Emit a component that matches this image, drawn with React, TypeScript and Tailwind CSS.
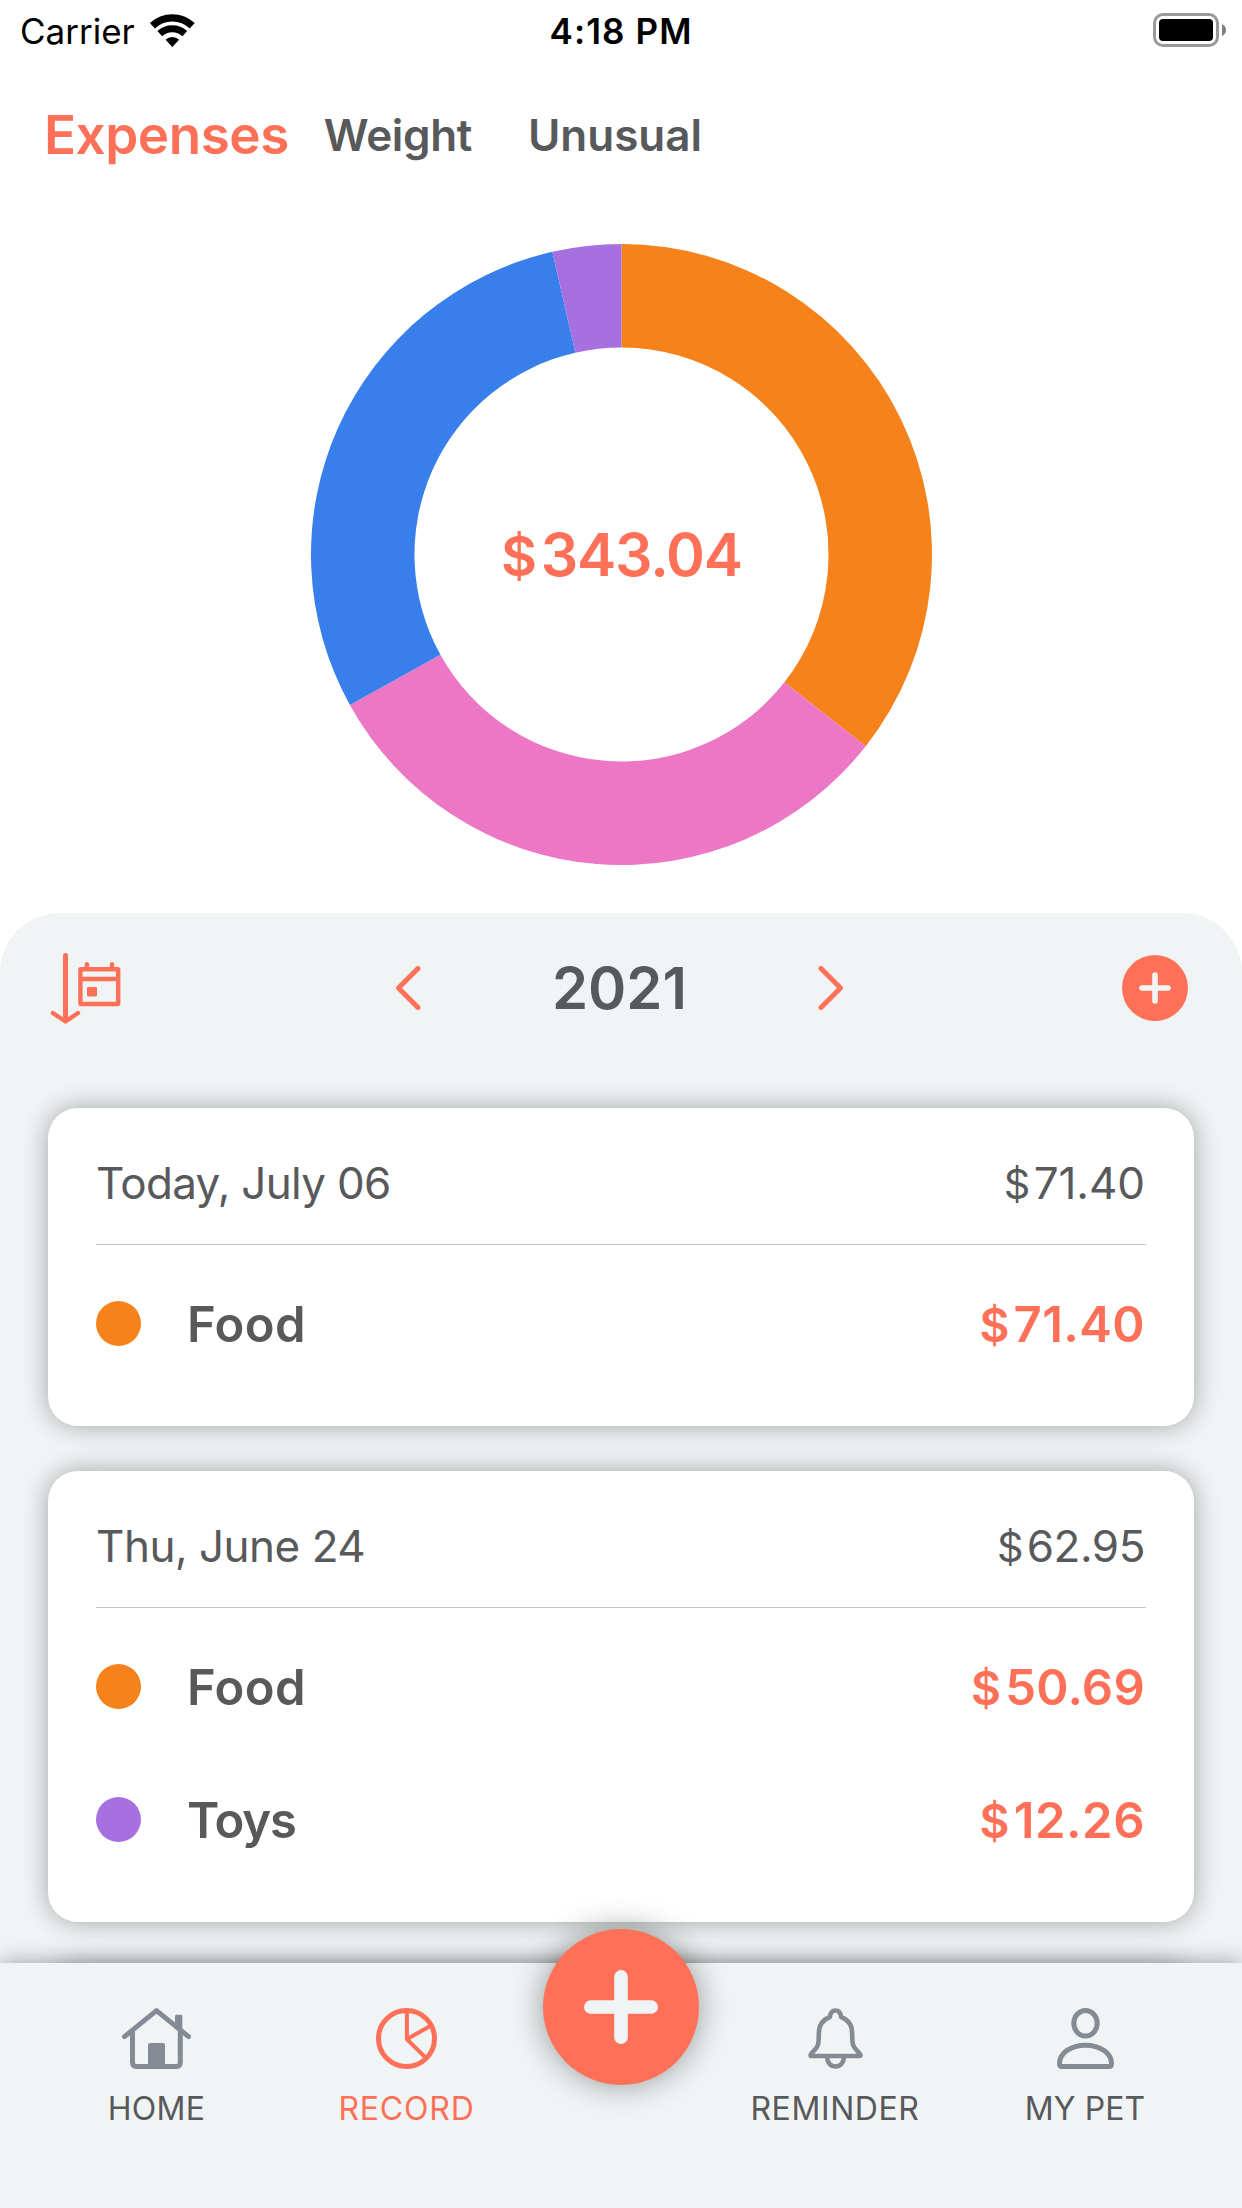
import React from "react";

const donut = [
  { name: "Food", value: 122.09, color: "#f6821b" },
  { name: "Health", value: 107.57, color: "#eb77c5" },
  { name: "Grooming", value: 101.12, color: "#387feb" },
  { name: "Toys", value: 12.26, color: "#a770e1" },
];

const days = [
  {
    date: "Today, July 06",
    tracking: "tracking-[-0.7px]",
    total: "71.40",
    totalTracking: "tracking-[-0.07px]",
    items: [
      { name: "Food", nameTracking: "tracking-[0.37px]", dot: "bg-[#f6821b]", amount: "71.40", amountTracking: "tracking-[0.37px]" },
    ],
  },
  {
    date: "Thu, June 24",
    tracking: "tracking-[-0.5px]",
    total: "62.95",
    totalTracking: "tracking-[-0.44px]",
    items: [
      { name: "Food", nameTracking: "tracking-[0.37px]", dot: "bg-[#f6821b]", amount: "50.69", amountTracking: "tracking-[0.22px]" },
      { name: "Toys", nameTracking: "tracking-[-1.1px]", dot: "bg-[#a770e1]", amount: "12.26", amountTracking: "tracking-[0.5px]" },
    ],
  },
];

function Money({ value, className }: { value: string; className: string }) {
  return (
    <span className={className}>
      <span className="mr-[0.085em] text-[0.94em]">$</span>
      {value}
    </span>
  );
}

function StatusBar() {
  return (
    <header className="grid h-[62px] shrink-0 grid-cols-3 items-center pl-5 pr-4 text-[35px] leading-none text-black">
      <div className="flex items-center">
        <span className="pt-px">Carrier</span>
        <svg className="ml-[13px] h-[36px] w-[48px]" viewBox="148 12 48 36" fill="none">
          <g stroke="currentColor">
            <path d="M152.4 24.7A29.2 29.2 0 0 1 192.2 24.7" strokeWidth="7.4" />
            <path d="M159.8 32.6A18.3 18.3 0 0 1 184.8 32.6" strokeWidth="7" />
          </g>
          <path d="M172.3 46 165.5 38.7A10 10 0 0 1 179.1 38.7Z" fill="currentColor" />
        </svg>
      </div>
      <span className="pr-[4px] pt-px text-center font-semibold tracking-[1.1px]">4:18 PM</span>
      <svg className="-mt-[2px] h-[34px] w-[73px] justify-self-end" viewBox="0 0 73 34">
        <rect x="1.5" y="1.5" width="63" height="31" rx="8.5" fill="none" stroke="#999" strokeWidth="3" />
        <rect x="6" y="6" width="54" height="22" rx="4" />
        <path d="M69 11Q73 13 73 17T69 23Z" fill="#808080" />
      </svg>
    </header>
  );
}

function Tabs() {
  return (
    <nav className="flex h-[147px] shrink-0 items-center whitespace-nowrap pl-11 text-[44px] font-semibold leading-none">
      <span className="text-[53px] tracking-[-0.48px] text-[#ff7058]">Expenses</span>
      <span className="-mt-[2px] ml-[35px] tracking-[-0.35px]">Weight</span>
      <span className="-mt-[2px] ml-14">Unusual</span>
    </nav>
  );
}

function Donut() {
  const total = donut.reduce((sum, s) => sum + s.value, 0);
  const outer = 310.5;
  const inner = 207;
  let start = 0;
  return (
    <section className="relative mx-auto h-[621px] w-[621px]">
      <svg className="size-full" viewBox="-310.5 -310.5 621 621">
        {donut.map((s) => {
          const end = start + (s.value / total) * 2 * Math.PI;
          const at = (r: number, a: number) => `${r * Math.sin(a)} ${-r * Math.cos(a)}`;
          const large = end - start > Math.PI ? 1 : 0;
          const d = `M${at(outer, start)}A${outer} ${outer} 0 ${large} 1 ${at(outer, end)}L${at(inner, end)}A${inner} ${inner} 0 ${large} 0 ${at(inner, start)}Z`;
          start = end;
          return <path key={s.name} d={d} fill={s.color} />;
        })}
      </svg>
      <div className="absolute inset-0 flex items-center justify-center pl-px text-[59px] font-semibold leading-none text-[#ff7058]">
        <Money value="343.04" className="tracking-[-1.2px]" />
      </div>
    </section>
  );
}

function SortByDateIcon() {
  return (
    <svg className="mt-[2px] h-[72px] w-[72px]" viewBox="50 953 72 72" fill="none" stroke="currentColor" strokeLinecap="round" strokeLinejoin="round">
      <path d="M65.5 955.5V1020" strokeWidth="5" />
      <path d="M52.8 1013 65.5 1021.5 78 1013" strokeWidth="4.4" />
      <g strokeWidth="4.4">
        <rect x="80.4" y="969.2" width="37.8" height="34.8" rx="0.5" />
        <path d="M81 979H118" />
        <path d="M86.9 964.2V968M112 964.2V968" />
      </g>
      <rect x="87" y="987" width="10" height="9.5" rx="1" fill="currentColor" stroke="none" />
    </svg>
  );
}

function YearBar() {
  return (
    <div className="grid h-[150px] shrink-0 grid-cols-3 items-center pl-[50px] pr-[54px] text-[#ff7058]">
      <SortByDateIcon />
      <div className="flex items-center justify-center gap-[131px] pl-px">
        <svg className="h-[44px] w-[26px] shrink-0" viewBox="0 0 26 44" fill="none" stroke="currentColor" strokeWidth="5" strokeLinecap="round" strokeLinejoin="round">
          <path d="M23 2.5 3.5 22 23 41.5" />
        </svg>
        <span className="text-[58px] font-semibold leading-none text-[#58595b]">2021</span>
        <svg className="h-[44px] w-[26px] shrink-0" viewBox="0 0 26 44" fill="none" stroke="currentColor" strokeWidth="5" strokeLinecap="round" strokeLinejoin="round">
          <path d="M3 2.5 22.5 22 3 41.5" />
        </svg>
      </div>
      <div className="flex size-[66px] items-center justify-center justify-self-end rounded-full bg-[#ff7058]">
        <svg className="size-8" viewBox="0 0 32 32" fill="none" stroke="#f0f4f5" strokeWidth="5.6" strokeLinecap="round">
          <path d="M16 3V29M3 16H29" />
        </svg>
      </div>
    </div>
  );
}

function DayCard({ day }: { day: (typeof days)[number] }) {
  return (
    <article className="rounded-[30px] bg-white px-12 pb-9 leading-none shadow-[0_0_26px_rgba(0,0,0,0.33)]">
      <div className="mb-3 flex h-[137px] items-center justify-between border-b border-[#c4c4c4] pr-px pt-[14px] text-[44px]">
        <span className={day.tracking}>{day.date}</span>
        <Money value={day.total} className={day.totalTracking} />
      </div>
      {day.items.map((item) => (
        <div key={item.name} className="flex h-[133px] items-center pr-px text-[49px] font-semibold">
          <span className={`size-[45px] rounded-full ${item.dot}`} />
          <span className={`ml-[46px] flex-1 pt-[2px] ${item.nameTracking}`}>{item.name}</span>
          <Money value={item.amount} className={`pt-[2px] text-[#ff7058] ${item.amountTracking}`} />
        </div>
      ))}
    </article>
  );
}

function HomeIcon() {
  return (
    <svg className="h-[61px] w-[69px]" viewBox="0 0 69 61" fill="none" stroke="currentColor" strokeWidth="5" strokeLinecap="round" strokeLinejoin="round">
      <path d="M2.5 28.6 34.5 2.6 66.5 28.6" />
      <path d="M10.5 23V54.5Q10.5 58.5 14.5 58.5H54.3Q58.3 58.5 58.3 54.5V23" />
      <path d="M26 58V37Q26 35 28 35H41Q43 35 43 37V58Z" fill="currentColor" stroke="none" />
      <path d="M53 20V8.2Q53 6.7 54.5 6.7H58.8Q60.3 6.7 60.3 8.2V25Z" fill="currentColor" stroke="none" />
    </svg>
  );
}

function RecordIcon() {
  return (
    <svg className="size-[61px]" viewBox="0 0 61 61" fill="none" stroke="currentColor">
      <circle cx="30.5" cy="30.5" r="28" strokeWidth="5" />
      <path d="M30.9 3V31.2L50 50M30.9 31.2 55 17.6" strokeWidth="4" />
    </svg>
  );
}

function BellIcon() {
  return (
    <svg className="h-[61px] w-[55px]" viewBox="0 0 55 61" fill="none" stroke="currentColor" strokeWidth="4.6" strokeLinejoin="round">
      <path d="M21.8 9.2C22.3 5 24.5 2.5 27.5 2.5S32.7 5 33.2 9.2C40.5 11.8 44.2 17.5 44.2 26C44.2 36 44.8 38.5 48.5 42.2C51.5 45.2 52.5 46.2 52.5 47.2Q52.5 48 51.5 48H3.5Q2.5 48 2.5 47.2C2.5 46.2 3.5 45.2 6.5 42.2C10.2 38.5 10.8 36 10.8 26C10.8 17.5 14.5 11.8 21.8 9.2Z" />
      <path d="M19.2 49V50A8.3 8.5 0 0 0 35.8 50V49" />
    </svg>
  );
}

function PetIcon() {
  return (
    <svg className="h-[61px] w-[57px]" viewBox="0 0 57 61" fill="none" stroke="currentColor" strokeWidth="5" strokeLinejoin="round">
      <ellipse cx="28.5" cy="15.3" rx="11.7" ry="12.8" />
      <path d="M2.5 55.5C2.5 45 14 37.2 28.5 37.2S54.5 45 54.5 55.5Q54.5 58.5 52 58.5H5Q2.5 58.5 2.5 55.5Z" />
    </svg>
  );
}

function TabItem({ icon, label, className }: { icon: React.ReactNode; label: string; className: string }) {
  return (
    <div className="flex w-[250px] flex-col items-center">
      {icon}
      <span className={`mt-[24px] text-[32px] leading-8 ${className}`}>{label}</span>
    </div>
  );
}

function TabBar() {
  return (
    <nav className="relative flex h-[245px] shrink-0 justify-between bg-[#f0f4f5] pl-[31.5px] pr-[32px] pt-[45px] text-[#858b95] shadow-[0_0_22px_rgba(0,0,0,0.36)]">
      <div className="flex">
        <TabItem icon={<HomeIcon />} label="HOME" className="tracking-[0.28px] text-[#58595b]" />
        <div className="text-[#ff7058]">
          <TabItem icon={<RecordIcon />} label="RECORD" className="tracking-[0.8px]" />
        </div>
      </div>
      <div className="flex">
        <TabItem icon={<BellIcon />} label="REMINDER" className="tracking-[0.6px] text-[#58595b]" />
        <TabItem icon={<PetIcon />} label="MY PET" className="tracking-[0.12px] text-[#58595b]" />
      </div>
      <div className="absolute -top-[34px] left-1/2 flex size-[156px] -translate-x-1/2 items-center justify-center rounded-full bg-[#ff7058] shadow-[0_0_32px_rgba(0,0,0,0.38)]">
        <svg className="size-[74px]" viewBox="0 0 74 74" fill="none" stroke="#f0f4f5" strokeWidth="13.6" strokeLinecap="round">
          <path d="M37 6.8V67.2M6.8 37H67.2" />
        </svg>
      </div>
    </nav>
  );
}

export default function App() {
  return (
    <div className="flex h-[2208px] w-[1242px] flex-col overflow-hidden bg-white font-[Inter,sans-serif] text-[#58595b]">
      <StatusBar />
      <Tabs />
      <div className="mt-[35px] shrink-0">
        <Donut />
      </div>
      <main className="mt-12 flex min-h-0 flex-1 flex-col overflow-hidden rounded-t-[60px] bg-[#f0f4f5]">
        <YearBar />
        <div className="mt-[45px] flex shrink-0 flex-col gap-[45px] px-12">
          {days.map((day) => (
            <DayCard key={day.date} day={day} />
          ))}
          <div className="h-[300px] rounded-[30px] bg-white shadow-[0_0_26px_rgba(0,0,0,0.33)]" />
        </div>
      </main>
      <TabBar />
    </div>
  );
}
